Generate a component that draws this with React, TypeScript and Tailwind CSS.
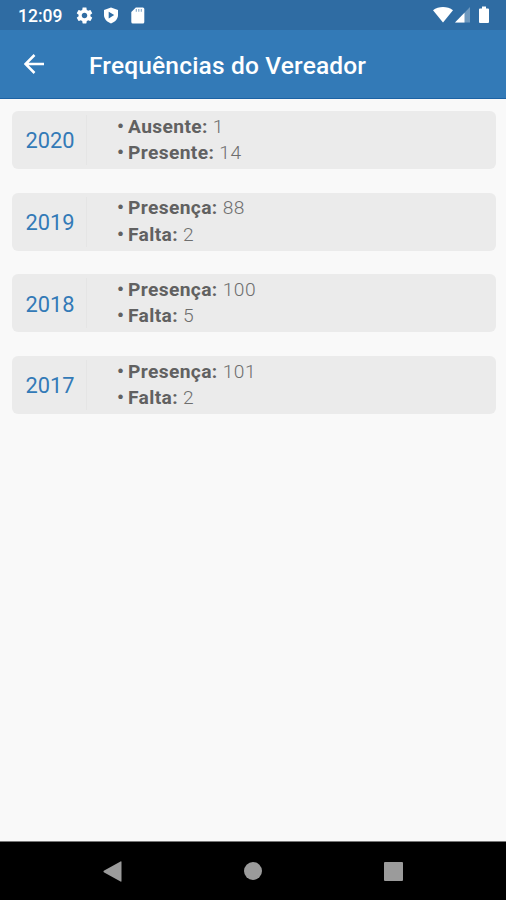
type Entry = { label: string; value: string };

const years: { year: string; entries: Entry[] }[] = [
  { year: '2020', entries: [{ label: 'Ausente:', value: '1' }, { label: 'Presente:', value: '14' }] },
  { year: '2019', entries: [{ label: 'Presença:', value: '88' }, { label: 'Falta:', value: '2' }] },
  { year: '2018', entries: [{ label: 'Presença:', value: '100' }, { label: 'Falta:', value: '5' }] },
  { year: '2017', entries: [{ label: 'Presença:', value: '101' }, { label: 'Falta:', value: '2' }] },
];

function StatusBar() {
  return (
    <div className="flex h-[30px] items-center bg-[#2f6ca3] pl-[18px] pr-[16px] text-white">
      <span className="w-[57px] pt-[3px] text-[17.5px] font-medium leading-none">12:09</span>
      <svg className="h-[19px] w-[19px]" viewBox="0 0 24 24" fill="currentColor">
        <path d="M19.43 12.98c.04-.32.07-.64.07-.98s-.03-.66-.07-.98l2.11-1.65c.19-.15.24-.42.12-.64l-2-3.46c-.12-.22-.39-.3-.61-.22l-2.49 1c-.52-.4-1.08-.73-1.69-.98l-.38-2.65C14.46 2.18 14.25 2 14 2h-4c-.25 0-.46.18-.49.42l-.38 2.65c-.61.25-1.17.59-1.69.98l-2.49-1c-.23-.09-.49 0-.61.22l-2 3.46c-.13.22-.07.49.12.64l2.11 1.65c-.04.32-.07.65-.07.98s.03.66.07.98l-2.11 1.65c-.19.15-.24.42-.12.64l2 3.46c.12.22.39.3.61.22l2.49-1c.52.4 1.08.73 1.69.98l.38 2.65c.03.24.24.42.49.42h4c.25 0 .46-.18.49-.42l.38-2.65c.61-.25 1.17-.59 1.69-.98l2.49 1c.23.09.49 0 .61-.22l2-3.46c.12-.22.07-.49-.12-.64l-2.11-1.65zM12 15.5c-1.93 0-3.5-1.57-3.5-3.5s1.57-3.5 3.5-3.5 3.5 1.57 3.5 3.5-1.57 3.5-3.5 3.5z" />
      </svg>
      <svg className="ml-[9px] h-[17px] w-[16px]" viewBox="0 0 16 17">
        <path fill="currentColor" d="M8 .5 15 3v5c0 4-3 7-7 8.5C4 15 1 12 1 8V3z" />
        <path className="fill-[#2f6ca3]" d="M5.7 4.7 11.2 8.1 5.7 11.5z" />
      </svg>
      <svg className="ml-[12px] h-[17px] w-[14px]" viewBox="0 0 14 17">
        <path fill="currentColor" d="M4.8.5h7A1.5 1.5 0 0 1 13.3 2v13a1.5 1.5 0 0 1-1.5 1.5h-10A1.5 1.5 0 0 1 .3 15V5z" />
        <path className="stroke-[#2f6ca3]" opacity=".6" strokeWidth="1.1" d="M5.3 2v2.8M7.8 2v2.8M10.3 2v2.8" />
      </svg>
      <svg className="ml-auto h-[16px] w-[20px]" viewBox="0 0 20 16" fill="currentColor">
        <path d="M0 3.2C5.5-1 14.5-1 20 3.2L10 15.5z" />
      </svg>
      <svg className="ml-[2px] h-[16px] w-[15px]" viewBox="0 0 15 16" fill="currentColor">
        <path opacity=".3" d="M15 0v15.5H0z" />
        <path d="M9.5 5.7v9.8H0z" />
      </svg>
      <svg className="ml-[8px] h-[18px] w-[12px]" viewBox="0 0 12 18" fill="currentColor">
        <path d="M4 .5h4v2h2a1 1 0 0 1 1 1V16a1 1 0 0 1-1 1H2a1 1 0 0 1-1-1V3.5a1 1 0 0 1 1-1h2z" />
      </svg>
    </div>
  );
}

function AppBar() {
  return (
    <header className="flex h-[69px] items-center border-b border-[#1c62a4] bg-[#337ab7] pl-[24px] text-white">
      <svg className="h-[20px] w-[20px]" viewBox="0 0 20 20" fill="none" stroke="currentColor" strokeWidth="2.5">
        <path d="M20 10H1.8M10.5 1 1.500 10l9 9" />
      </svg>
      <h1 className="ml-[45px] pt-[4px] text-[24.5px] font-medium leading-none tracking-[0.17px] whitespace-nowrap">
        Frequências do Vereador
      </h1>
    </header>
  );
}

function YearCard({ year, entries }: { year: string; entries: Entry[] }) {
  return (
    <section className="flex h-[58px] items-center rounded-[6px] bg-[#ebebeb]">
      <div className="flex h-[50px] w-[75px] items-center border-r border-[#e5e5e5] pl-[13.5px] pt-[3px] text-[21.8px] text-[#337ab7]">
        {year}
      </div>
      <ul className="pl-[30px] text-[19.2px] leading-[26.5px] text-[#6e6e6e]">
        {entries.map((entry) => (
          <li key={entry.label} className="flex whitespace-nowrap">
            <span className="w-[11px] font-bold text-[#616161]">•</span>
            <span className="mr-[5px] font-bold tracking-[0.38px] text-[#616161]">{entry.label}</span>
            <span className="font-light tracking-[0.5px]">{entry.value}</span>
          </li>
        ))}
      </ul>
    </section>
  );
}

export default function App() {
  return (
    <div className="flex h-[900px] w-[506px] flex-col overflow-hidden bg-[#f9f9f9] font-[Roboto,sans-serif]">
      <StatusBar />
      <AppBar />
      <main className="flex flex-1 flex-col gap-[23.7px] pl-[12px] pr-[10px] pt-[12px]">
        {years.map((item) => (
          <YearCard key={item.year} {...item} />
        ))}
      </main>
      <nav className="flex h-[59px] items-center border-t border-[#777] bg-black pl-[103px]">
        <svg className="h-[21px] w-[19px] fill-[#9b9b9b]" viewBox="0 0 19 21">
          <path d="M17.5.5Q18.5 0 18.5 1v19q0 1-1 .5L.8 11.2Q0 10.5.8 9.8z" />
        </svg>
        <span className="ml-[122px] h-[18px] w-[18px] rounded-full bg-[#9b9b9b]" />
        <span className="ml-[122px] h-[19px] w-[19px] rounded-[1px] bg-[#9b9b9b]" />
      </nav>
    </div>
  );
}
